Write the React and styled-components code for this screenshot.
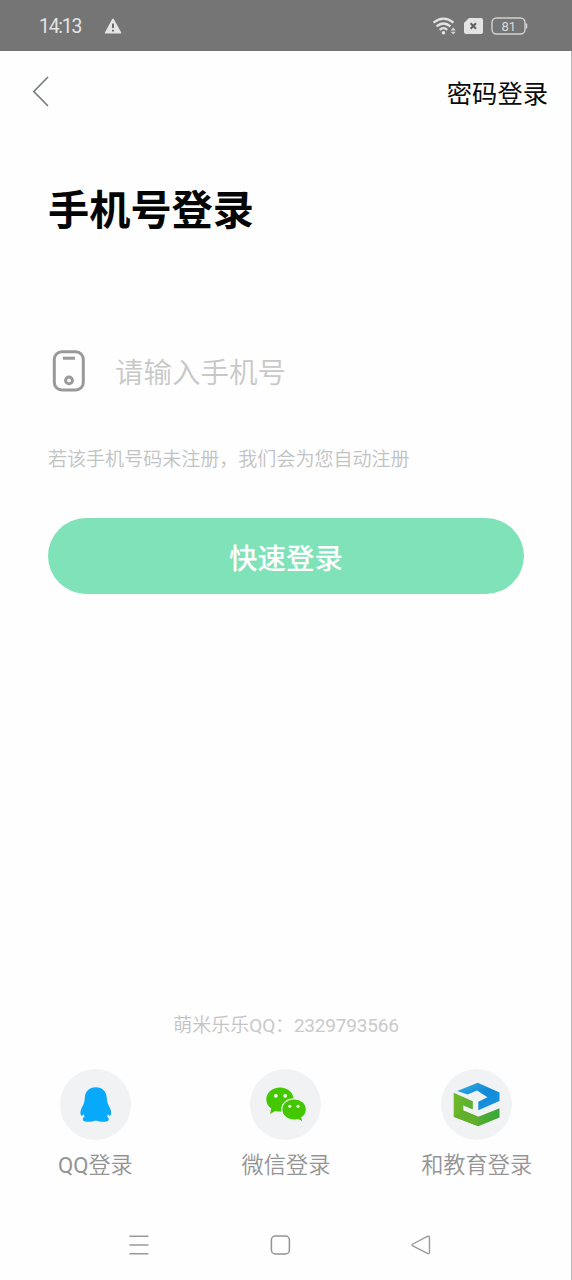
import React from "react";
import styled, { createGlobalStyle } from "styled-components";

const GlobalStyle = createGlobalStyle`
  * { box-sizing: border-box; }
  body {
    margin: 0;
    background: #fefefe;
    font-family: Roboto, "Noto Sans CJK SC", sans-serif;
  }
`;

const Screen = styled.div`
  width: 572px;
  height: 1280px;
  display: flex;
  flex-direction: column;
  background: #fefefe;
  overflow: hidden;
`;

const StatusBar = styled.header`
  height: 51px;
  flex: none;
  display: flex;
  align-items: center;
  padding: 0 44px 0 39px;
  background: #757575;
  color: #e4e4e4;
`;

const Clock = styled.span`
  width: 64.5px;
  font-size: 19.3px;
  line-height: 24px;
  letter-spacing: -1.2px;
  padding-top: 2px;
`;

const StatusIcons = styled.div`
  margin-left: auto;
  display: flex;
  align-items: center;
  gap: 8px;
`;

const Body = styled.div`
  flex: 1;
  display: flex;
  flex-direction: column;
  box-shadow: inset -1px 0 #b4b4b4;
`;

const NavBar = styled.nav`
  height: 83px;
  display: flex;
  align-items: center;
  justify-content: space-between;
  padding: 0 24px 2px 32px;
`;

const PlainButton = styled.button`
  display: flex;
  padding: 0;
  border: 0;
  background: none;
  font: inherit;
  color: #0a0a0a;
`;

const SwitchMode = styled(PlainButton)`
  padding-top: 6px;
  font-size: 25.3px;
  line-height: 36px;
`;

const Form = styled.main`
  display: flex;
  flex-direction: column;
  padding: 0 48px;
`;

const Title = styled.h1`
  margin: 47px 0 0;
  font-size: 41.2px;
  line-height: 60px;
  font-weight: 700;
  color: #050505;
`;

const PhoneField = styled.label`
  display: flex;
  align-items: center;
  height: 60px;
  margin-top: 100px;
  padding-left: 4px;
`;

const PhoneInput = styled.input`
  flex: 1;
  min-width: 0;
  height: 48px;
  margin-left: 30px;
  padding: 5px 0 0;
  border: 0;
  outline: 0;
  background: none;
  font: inherit;
  font-size: 28.5px;
  font-weight: 350;
  color: #333;
  &::placeholder {
    color: #c8c8c8;
    opacity: 1;
  }
`;

const Hint = styled.p`
  margin: 45px 0 0;
  font-size: 19.05px;
  line-height: 28px;
  font-weight: 350;
  color: #c2c2c2;
  white-space: nowrap;
`;

const SubmitButton = styled.button`
  height: 76px;
  margin-top: 44px;
  padding: 0;
  border: 0;
  border-radius: 38px;
  background: #80e2b9;
  color: #fff;
  font: inherit;
  font-size: 28.5px;
  font-weight: 500;
`;

const Contact = styled.p`
  margin: auto 0 0;
  font-size: 19px;
  line-height: 28px;
  text-align: center;
  font-weight: 350;
  color: #c4c4c4;
`;

const Latin = styled.span`
  font-weight: 400;
`;

const ContactNumber = styled(Latin)`
  letter-spacing: -0.2px;
  color: #cacaca;
`;

const Providers = styled.div`
  display: grid;
  grid-template-columns: repeat(3, 1fr);
  margin-top: 29px;
`;

const Provider = styled(PlainButton)`
  flex-direction: column;
  align-items: center;
  gap: 9px;
  font-size: 22.2px;
  line-height: 32px;
  font-weight: 350;
  color: #949494;
  white-space: nowrap;
`;

const Badge = styled.span`
  width: 71px;
  height: 71px;
  border-radius: 50%;
  display: flex;
  background: #f0f2f4;
`;

const SystemNav = styled.footer`
  height: 69px;
  margin-top: 30px;
  display: flex;
  align-items: center;
  justify-content: space-between;
  padding: 0 140px 2px 128px;
`;

const WarningIcon = () => (
  <svg width="18" height="16" viewBox="0 0 18 16">
    <path d="M8.2 1Q9 0 9.8 1L17.2 14.5Q17.6 15.6 16.5 15.6H1.3Q.4 15.6.9 14.5Z" fill="#e4e4e4" />
    <path d="M9 5.5v4.6M9 11.7v1.8" stroke="#666" strokeWidth="1.9" />
  </svg>
);

const WifiIcon = () => (
  <svg width="24" height="18" viewBox="0 0 24 18" fill="none" stroke="#e4e4e4" strokeWidth="2.2">
    <path d="M1.5 5.6Q11.5 -2.4 21.5 5.6M4.5 9.4Q11.5 3.6 18.5 9.4M7.7 12.8Q11.5 9.6 15.3 12.8" />
    <circle cx="11.5" cy="15.7" r="1.7" fill="#e4e4e4" stroke="none" />
    <path d="M21.2 10.4l2.6 3.2h-5.2zM21.2 17.6l2.6-2.8h-5.2z" fill="#d4d4d4" stroke="none" />
  </svg>
);

const SimIcon = () => (
  <svg width="19" height="16" viewBox="0 0 19 16">
    <path d="M5 0H17a2 2 0 0 1 2 2V14a2 2 0 0 1-2 2H2a2 2 0 0 1-2-2V5Z" fill="#e4e4e4" />
    <path d="M6.6 5.3l5.4 5.4M12 5.3l-5.4 5.4" stroke="#606060" strokeWidth="2" />
  </svg>
);

const BatteryIcon = () => (
  <svg width="37" height="18" viewBox="0 0 37 18">
    <rect x="1" y="1" width="33" height="16" rx="4.5" fill="none" stroke="#d2d2d2" strokeWidth="1.4" />
    <path d="M35.5 6.5v5" stroke="#d2d2d2" strokeWidth="1.5" />
    <text x="17.7" y="13.5" textAnchor="middle" fontFamily="Roboto, sans-serif" fontSize="13" fill="#dadada">81</text>
  </svg>
);

const BackIcon = () => (
  <svg width="18" height="32" viewBox="0 0 18 32">
    <path d="M16 1L1.8 15.5L16 30" fill="none" stroke="#747a7a" strokeWidth="1.6" />
  </svg>
);

const PhoneIcon = () => (
  <svg width="33" height="42" viewBox="0 0 33 42" fill="none" stroke="#999" strokeWidth="3">
    <rect x="2.3" y="1.8" width="29" height="38.2" rx="7.5" />
    <path d="M10.8 8.2h12.2" />
    <circle cx="17" cy="30.4" r="3.4" />
  </svg>
);

const QQIcon = () => (
  <svg width="71" height="71" viewBox="0 0 71 71">
    <path
      d="M35.8 18.3C42.5 18.3 46.6 22.8 46.8 29C46.9 31 47.2 32.6 47.7 34.2C48.6 36.6 50.4 39 51 42C51.5 44.6 50.9 46.6 50 46.8C49.2 47 48.4 45.7 47.8 44.9C47.6 46.2 47.4 47 47 47.6C49 48.7 49.2 50.7 48.2 51.7C46.5 53.3 39.8 53.1 36.8 51.7H34.8C31.8 53.1 25.1 53.3 23.4 51.7C22.4 50.7 22.6 48.7 24.6 47.6C24.2 47 24 46.2 23.8 44.9C23.2 45.7 22.4 47 21.6 46.8C20.7 46.6 20.1 44.6 20.6 42C21.2 39 23 36.6 23.9 34.2C24.4 32.6 24.7 31 24.8 29C25 22.8 29.1 18.3 35.8 18.3Z"
      fill="#08a9fa"
    />
  </svg>
);

const WeChatIcon = () => (
  <svg width="71" height="71" viewBox="0 0 71 71">
    <path
      d="M30 18.5C22.3 18.5 16.3 23.8 16.3 30.4C16.3 34.2 18.2 37.4 21.3 39.6L20 45L25.3 42C27 42.4 28.5 42.6 30.5 42.5C37.6 42.3 43.7 37 43.7 30.4C43.7 23.8 37.6 18.5 30 18.5Z"
      fill="#43c800"
    />
    <path
      d="M44 29.8C37 29.8 31.8 34.5 31.8 40.4C31.8 46.3 37 51.2 44 51.2C45.6 51.2 46.8 51 48.3 50.6L53.2 53.6L51.8 48.6C54.8 46.6 56.4 43.7 56.4 40.4C56.4 34.5 51 29.8 44 29.8Z"
      fill="#43c800"
      stroke="#f0f2f4"
      strokeWidth="1.2"
    />
    <g fill="#f5faf2">
      <circle cx="25.8" cy="26.8" r="1.9" />
      <circle cx="35.2" cy="26.8" r="1.9" />
      <circle cx="39.8" cy="37.2" r="1.5" />
      <circle cx="48" cy="37.2" r="1.5" />
    </g>
  </svg>
);

const EducationIcon = () => (
  <svg width="71" height="71" viewBox="0 0 71 71">
    <defs>
      <linearGradient id="cubeBlue" x1="0" y1="0" x2="1" y2="1">
        <stop offset="0" stopColor="#38afe5" />
        <stop offset=".5" stopColor="#1089d6" />
        <stop offset="1" stopColor="#1a98e2" />
      </linearGradient>
      <linearGradient id="cubeGreen">
        <stop offset="0" stopColor="#70b72b" />
        <stop offset="1" stopColor="#39a638" />
      </linearGradient>
    </defs>
    <path d="M16.2 22L36.7 13.8L58.5 23.5V32L37.3 41.2V32.8L46.5 28.3L36 21.5L26.5 25.4Z" fill="url(#cubeBlue)" />
    <path d="M12.7 23.8L31.8 32.2V40.4L22.3 36.6V41.6L37.3 47.8L58.5 39.2V48.5L37.3 57.2L12.7 47.8Z" fill="url(#cubeGreen)" />
    <path d="M12.7 47.8L22.3 41.6L37.3 47.8V57.2Z" fill="#60b02c" />
  </svg>
);

const MenuIcon = () => (
  <svg width="22" height="22" viewBox="0 0 22 22">
    <path d="M1.4 2.3h19M1.4 11h19M1.4 19.7h19" stroke="#999" strokeWidth="1.5" />
  </svg>
);

const HomeIcon = () => (
  <svg width="22" height="22" viewBox="0 0 22 22">
    <rect x="2.4" y="2" width="18" height="18" rx="4" fill="none" stroke="#939393" strokeWidth="1.5" />
  </svg>
);

const ReturnIcon = () => (
  <svg width="22" height="22" viewBox="0 0 22 22">
    <path d="M2.8 10L17.4 2.5Q19.5 1.5 19.5 3.5V18.3Q19.5 20.3 17.4 19.3L2.8 12Q1 11 2.8 10Z" fill="none" stroke="#999" strokeWidth="1.4" />
  </svg>
);

const providers = [
  { id: "qq", label: <span><Latin>QQ</Latin>登录</span>, Icon: QQIcon },
  { id: "wechat", label: "微信登录", Icon: WeChatIcon },
  { id: "education", label: "和教育登录", Icon: EducationIcon },
];

export default function App() {
  return (
    <Screen>
      <GlobalStyle />
      <StatusBar>
        <Clock>14:13</Clock>
        <WarningIcon />
        <StatusIcons>
          <WifiIcon />
          <SimIcon />
          <BatteryIcon />
        </StatusIcons>
      </StatusBar>
      <Body>
        <NavBar>
          <PlainButton aria-label="返回"><BackIcon /></PlainButton>
          <SwitchMode>密码登录</SwitchMode>
        </NavBar>
        <Form>
          <Title>手机号登录</Title>
          <PhoneField>
            <PhoneIcon />
            <PhoneInput type="tel" placeholder="请输入手机号" />
          </PhoneField>
          <Hint>若该手机号码未注册，我们会为您自动注册</Hint>
          <SubmitButton>快速登录</SubmitButton>
        </Form>
        <Contact>萌米乐乐<ContactNumber>QQ：2329793566</ContactNumber></Contact>
        <Providers>
          {providers.map(({ id, label, Icon }) => (
            <Provider key={id}>
              <Badge><Icon /></Badge>
              {label}
            </Provider>
          ))}
        </Providers>
        <SystemNav>
          <MenuIcon />
          <HomeIcon />
          <ReturnIcon />
        </SystemNav>
      </Body>
    </Screen>
  );
}
